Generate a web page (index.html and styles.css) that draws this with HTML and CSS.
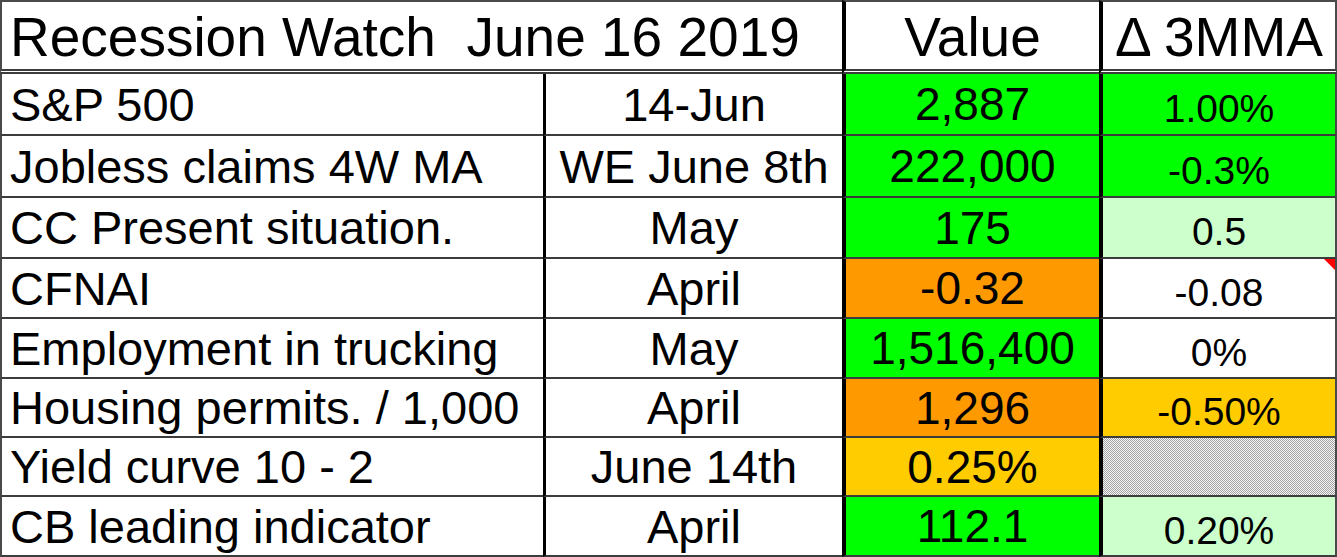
FILE: index.html
```html
<!DOCTYPE html>
<html>
<head>
<meta charset="utf-8">
<link rel="stylesheet" href="styles.css">
</head>
<body>
<div class="sheet">
  <div class="cell head title c1 span2">Recession Watch  June 16 2019</div>
  <div class="cell head c3 center">Value</div>
  <div class="cell head c4 center">Δ 3MMA</div>

  <div class="cell c1 label">S&amp;P 500</div>
  <div class="cell c2 center">14-Jun</div>
  <div class="cell c3 center green">2,887</div>
  <div class="cell c4 center delta green">1.00%</div>

  <div class="cell c1 label">Jobless claims 4W MA</div>
  <div class="cell c2 center">WE June 8th</div>
  <div class="cell c3 center green">222,000</div>
  <div class="cell c4 center delta green">-0.3%</div>

  <div class="cell c1 label">CC Present situation.</div>
  <div class="cell c2 center">May</div>
  <div class="cell c3 center green">175</div>
  <div class="cell c4 center delta light">0.5</div>

  <div class="cell c1 label">CFNAI</div>
  <div class="cell c2 center">April</div>
  <div class="cell c3 center orange">-0.32</div>
  <div class="cell c4 center delta note">-0.08<span class="flag"></span></div>

  <div class="cell c1 label">Employment in trucking</div>
  <div class="cell c2 center">May</div>
  <div class="cell c3 center green">1,516,400</div>
  <div class="cell c4 center delta">0%</div>

  <div class="cell c1 label">Housing permits. / 1,000</div>
  <div class="cell c2 center">April</div>
  <div class="cell c3 center orange">1,296</div>
  <div class="cell c4 center delta gold">-0.50%</div>

  <div class="cell c1 label">Yield curve 10 - 2</div>
  <div class="cell c2 center">June 14th</div>
  <div class="cell c3 center gold">0.25%</div>
  <div class="cell c4 center delta pattern"></div>

  <div class="cell c1 label">CB leading indicator</div>
  <div class="cell c2 center">April</div>
  <div class="cell c3 center green">112.1</div>
  <div class="cell c4 center delta light">0.20%</div>
</div>
</body>
</html>
```

FILE: styles.css
```css
html, body {
  margin: 0;
  padding: 0;
  background: #ffffff;
}

.sheet {
  display: grid;
  grid-template-columns: 543px 299px 257px 238px;
  grid-template-rows: 74px 62px 62px 61px 60px 60px 59px 59px 60px;
  width: 1337px;
  height: 557px;
  font-family: "Liberation Sans", Arial, sans-serif;
  color: #000;
}

.cell {
  box-sizing: border-box;
  display: flex;
  align-items: center;
  border-bottom: 2px solid #3c3c3c;
  font-size: 47px;
  line-height: 1;
  white-space: pre;
  background: #fff;
  position: relative;
  overflow: hidden;
}

.head {
  border-top: 2px solid #4a4a4a;
  border-bottom: 5px double #3c3c3c;
  font-size: 55px;
  padding-top: 3px;
}

.title {
  grid-column: 1 / 3;
}

.c1 {
  border-left: 2px solid #4a4a4a;
  padding-left: 8px;
}

.c2 {
  border-left: 3px solid #000;
}

.c3 {
  border-left: 4px solid #000;
  font-size: 46px;
}

.head.c3 {
  font-size: 55px;
}

.c4 {
  border-left: 4px solid #000;
  border-right: 2px solid #4a4a4a;
}

.center {
  justify-content: center;
}

.delta {
  font-size: 39px;
  padding-top: 8px;
}

.green { background: #00ff00; }
.orange { background: #ff9900; }
.gold { background: #ffcc00; }
.light { background: #ccffcc; }

.pattern {
  background-color: #f0f0f0;
  background-image: repeating-conic-gradient(#a2a2a2 0% 25%, #f6f6f6 0% 50%);
  background-size: 2px 2px;
}

.flag {
  position: absolute;
  top: 0;
  right: 0;
  width: 0;
  height: 0;
  border-top: 11px solid #ff0000;
  border-left: 11px solid transparent;
}
```
